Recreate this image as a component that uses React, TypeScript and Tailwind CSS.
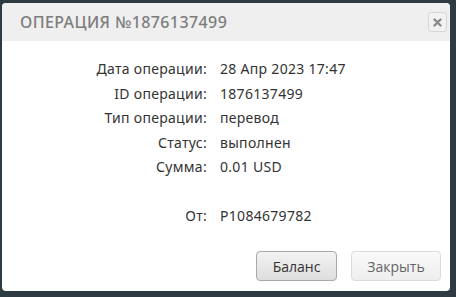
export default function App() {
  const rows: [string, string][] = [
    ["Дата операции:", "28 Апр 2023 17:47"],
    ["ID операции:", "1876137499"],
    ["Тип операции:", "перевод"],
    ["Статус:", "выполнен"],
    ["Сумма:", "0.01 USD"],
  ];

  return (
    <main className="h-[297px] w-[456px] bg-[#2e3b42] pt-[3px] pl-[2px]">
      <div className="flex h-[288px] w-[448px] flex-col overflow-hidden rounded-[4px] bg-white">
        <header className="flex h-[38px] items-center justify-between bg-[#efefef] pl-[18px] pr-[3px]">
          <h1 className="font-['Noto_Sans',sans-serif] text-[16px] font-medium tracking-[0.4px] text-[#7d7d7d]">
            ОПЕРАЦИЯ №1876137499
          </h1>
          <button className="flex h-[20px] w-[19px] items-center justify-center rounded-[3px] border border-[#d6d6d6] bg-[#f2f2f2]">
            <svg width="9" height="9" viewBox="0 0 9 9">
              <path d="M1.5 1.5 L7.5 7.5 M7.5 1.5 L1.5 7.5" stroke="#8a8a8a" strokeWidth="2.4" strokeLinecap="round" />
            </svg>
          </button>
        </header>

        <div className="flex flex-1 flex-col font-['Noto_Sans',sans-serif] text-[14px] tracking-[0.3px] text-[#333]">
          <div className="mt-[16px] grid grid-cols-[205px_1fr] gap-x-[13px]">
            {rows.map(([label, value]) => (
              <div key={label} className="contents">
                <span className="h-[24.5px] text-right leading-[24.5px]">{label}</span>
                <span className="h-[24.5px] leading-[24.5px]">{value}</span>
              </div>
            ))}
            <span className="h-[24.5px]" />
            <span className="h-[24.5px]" />
            <span className="h-[24.5px] text-right leading-[24.5px]">От:</span>
            <span className="h-[24.5px] leading-[24.5px]">P1084679782</span>
          </div>

          <div className="mt-auto mb-[10px] flex justify-end gap-[14px] pr-[9px] font-['Open_Sans',sans-serif] tracking-normal">
            <button className="h-[30px] w-[81px] rounded-[4px] border border-[#a9a9a9] bg-gradient-to-b from-[#f3f3f3] to-[#dedede] text-[14px] text-[#333]">
              Баланс
            </button>
            <button className="h-[30px] w-[90px] rounded-[4px] border border-[#dcdcdc] bg-gradient-to-b from-[#fafafa] to-[#eeeeee] text-[14px] text-[#666]">
              Закрыть
            </button>
          </div>
        </div>
      </div>
    </main>
  );
}
